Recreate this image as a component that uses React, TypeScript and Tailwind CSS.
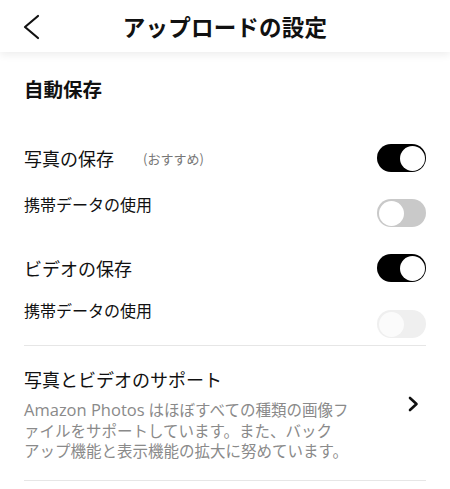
import React from "react";

function Toggle({ state }: { state: "on" | "off" | "disabled" }) {
  if (state === "on") {
    return (
      <div className="w-[49px] h-[28px] rounded-full bg-black flex items-center justify-end pr-[1.5px] shrink-0">
        <div className="w-[25px] h-[25px] rounded-full bg-white" />
      </div>
    );
  }
  if (state === "off") {
    return (
      <div className="w-[49px] h-[28px] rounded-full bg-[#c9c9c9] flex items-center justify-start pl-[1.5px] shrink-0">
        <div className="w-[25px] h-[25px] rounded-full bg-white" />
      </div>
    );
  }
  return (
    <div className="w-[49px] h-[28px] rounded-full bg-[#efefef] flex items-center justify-start pl-[1.5px] shrink-0">
      <div className="w-[25px] h-[25px] rounded-full bg-[#fbfbfb]" />
    </div>
  );
}

export default function App() {
  const jp = { fontFamily: '"Noto Sans CJK JP", "Noto Sans", sans-serif' };
  return (
    <div className="w-[450px] h-[489px] bg-white overflow-hidden text-[#111]" style={jp}>
      <header className="relative h-[52px] flex items-center justify-center bg-white shadow-[0_3px_8px_rgba(0,0,0,0.07)]">
        <svg
          className="absolute left-[22px] top-[13px]"
          width="20"
          height="28"
          viewBox="0 0 20 28"
          fill="none"
          stroke="#111"
          strokeWidth="2.2"
          strokeLinecap="round"
          strokeLinejoin="round"
        >
          <polyline points="16,3 3,14 16,25" />
        </svg>
        <h1 className="text-[22.5px] font-bold leading-none tracking-[0.2px]">アップロードの設定</h1>
      </header>

      <div className="px-6">
        <div className="h-[74px] flex items-center">
          <span className="text-[19.5px] font-bold leading-none">自動保存</span>
        </div>

        <div className="h-[64px] flex items-center justify-between">
          <div className="flex items-center">
            <span className="text-[18px] leading-none">写真の保存</span>
            <span className="ml-[29px] text-[13px] leading-none text-[#777]">(おすすめ)</span>
          </div>
          <Toggle state="on" />
        </div>

        <div className="h-[50px] flex items-start justify-between">
          <span className="mt-[3px] text-[16px] leading-[22px]">携帯データの使用</span>
          <div className="mt-[9px]">
            <Toggle state="off" />
          </div>
        </div>

        <div className="h-[56px] flex items-center justify-between">
          <span className="text-[18px] leading-none">ビデオの保存</span>
          <Toggle state="on" />
        </div>

        <div className="h-[49px] flex items-start justify-between">
          <span className="mt-[3px] text-[16px] leading-[22px]">携帯データの使用</span>
          <div className="mt-[14px]">
            <Toggle state="disabled" />
          </div>
        </div>

        <div className="border-t border-[#e6e6e6]" />

        <div className="flex items-center justify-between pt-[21px] pb-[20px]">
          <div>
            <div className="text-[18px] leading-[24px]">写真とビデオのサポート</div>
            <div className="mt-[9px] text-[15.5px] text-[#8a8a8a] whitespace-nowrap">
              <div className="h-[20px] leading-[20px] flex items-center">
                <span
                  className="text-[16.5px] leading-none mr-[4px]"
                  style={{ fontFamily: '"Open Sans", "Noto Sans CJK JP", sans-serif' }}
                >
                  Amazon Photos
                </span>
                <span className="leading-none">はほぼすべての種類の画像フ</span>
              </div>
              <div className="h-[20px] leading-[20px]">ァイルをサポートしています。また、バック</div>
              <div className="h-[20px] leading-[20px]">アップ機能と表示機能の拡大に努めています。</div>
            </div>
          </div>
          <svg
            className="mr-[7px] mb-[20px]"
            width="12"
            height="16"
            viewBox="0 0 12 16"
            fill="none"
            stroke="#111"
            strokeWidth="2.6"
            strokeLinecap="round"
            strokeLinejoin="round"
          >
            <polyline points="3,2 9.5,8 3,14" />
          </svg>
        </div>

        <div className="border-t border-[#e6e6e6]" />
      </div>
    </div>
  );
}
